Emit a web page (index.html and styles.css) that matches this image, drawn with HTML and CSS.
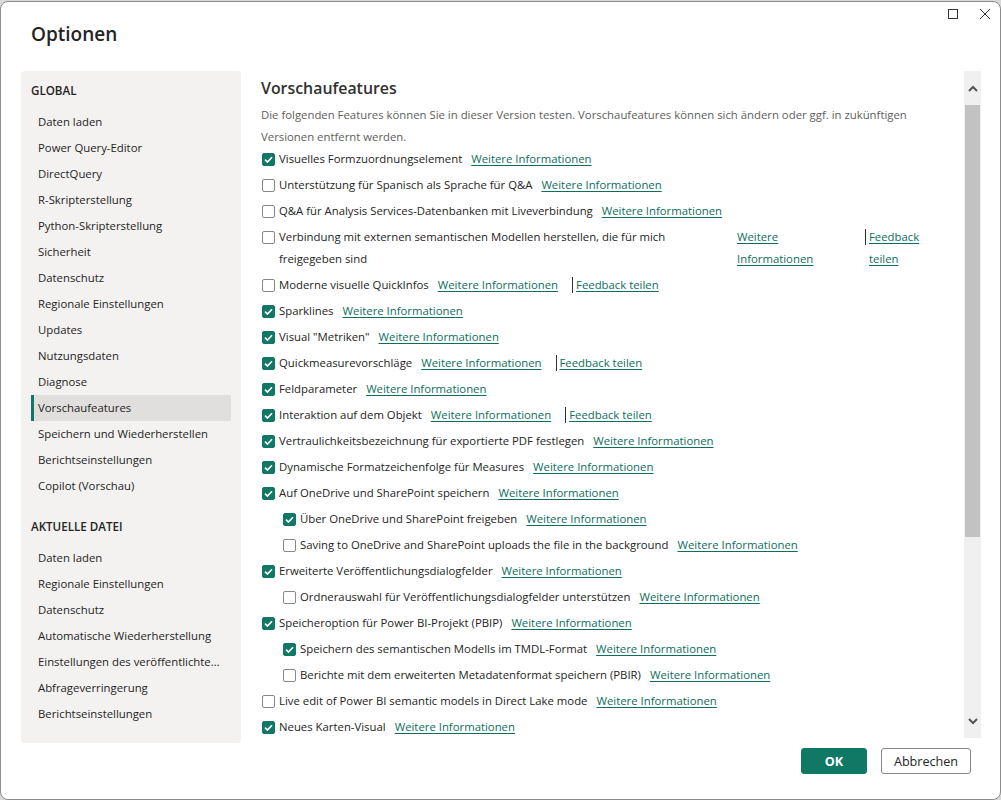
FILE: index.html
```html
<!DOCTYPE html>
<html lang="de">
<head>
<meta charset="utf-8">
<title>Optionen</title>
<link rel="stylesheet" href="styles.css">
</head>
<body>
<div class="window">
  <header class="header">
    <h1 class="title">Optionen</h1>
    <div class="controls">
      <svg class="ctl" width="12" height="12" viewBox="0 0 12 12"><rect x="1.5" y="1.5" width="9" height="9" fill="none" stroke="#333" stroke-width="1"/></svg>
      <svg class="ctl" width="12" height="12" viewBox="0 0 12 12"><path d="M1 1 L11 11 M11 1 L1 11" stroke="#333" stroke-width="1"/></svg>
    </div>
  </header>
  <div class="body">
    <nav class="sidebar">
      <div class="section-title">GLOBAL</div>
      <ul class="nav">
        <li class="nav-item">Daten laden</li>
        <li class="nav-item">Power Query-Editor</li>
        <li class="nav-item">DirectQuery</li>
        <li class="nav-item">R-Skripterstellung</li>
        <li class="nav-item">Python-Skripterstellung</li>
        <li class="nav-item">Sicherheit</li>
        <li class="nav-item">Datenschutz</li>
        <li class="nav-item">Regionale Einstellungen</li>
        <li class="nav-item">Updates</li>
        <li class="nav-item">Nutzungsdaten</li>
        <li class="nav-item">Diagnose</li>
        <li class="nav-item active">Vorschaufeatures</li>
        <li class="nav-item">Speichern und Wiederherstellen</li>
        <li class="nav-item">Berichtseinstellungen</li>
        <li class="nav-item">Copilot (Vorschau)</li>
      </ul>
      <div class="section-title second">AKTUELLE DATEI</div>
      <ul class="nav">
        <li class="nav-item">Daten laden</li>
        <li class="nav-item">Regionale Einstellungen</li>
        <li class="nav-item">Datenschutz</li>
        <li class="nav-item">Automatische Wiederherstellung</li>
        <li class="nav-item">Einstellungen des veröffentlichten Berichts</li>
        <li class="nav-item">Abfrageverringerung</li>
        <li class="nav-item">Berichtseinstellungen</li>
      </ul>
    </nav>
    <main class="main">
      <div class="content">
        <h2 class="heading">Vorschaufeatures</h2>
        <p class="desc">Die folgenden Features können Sie in dieser Version testen. Vorschaufeatures können sich ändern oder ggf. in zukünftigen Versionen entfernt werden.</p>
        <div class="row"><span class="cb on"></span><span class="label">Visuelles Formzuordnungselement</span><a class="link">Weitere Informationen</a></div>
        <div class="row"><span class="cb"></span><span class="label">Unterstützung für Spanisch als Sprache für Q&amp;A</span><a class="link">Weitere Informationen</a></div>
        <div class="row"><span class="cb"></span><span class="label">Q&amp;A für Analysis Services-Datenbanken mit Liveverbindung</span><a class="link">Weitere Informationen</a></div>
        <div class="row long"><span class="cb"></span><span class="label">Verbindung mit externen semantischen Modellen herstellen, die für mich freigegeben sind</span><a class="link">Weitere Informationen</a><span class="sep"></span><a class="link fb">Feedback teilen</a></div>
        <div class="row"><span class="cb"></span><span class="label">Moderne visuelle QuickInfos</span><a class="link">Weitere Informationen</a><span class="sep"></span><a class="link">Feedback teilen</a></div>
        <div class="row"><span class="cb on"></span><span class="label">Sparklines</span><a class="link">Weitere Informationen</a></div>
        <div class="row"><span class="cb on"></span><span class="label">Visual "Metriken"</span><a class="link">Weitere Informationen</a></div>
        <div class="row"><span class="cb on"></span><span class="label">Quickmeasurevorschläge</span><a class="link">Weitere Informationen</a><span class="sep"></span><a class="link">Feedback teilen</a></div>
        <div class="row"><span class="cb on"></span><span class="label">Feldparameter</span><a class="link">Weitere Informationen</a></div>
        <div class="row"><span class="cb on"></span><span class="label">Interaktion auf dem Objekt</span><a class="link">Weitere Informationen</a><span class="sep"></span><a class="link">Feedback teilen</a></div>
        <div class="row"><span class="cb on"></span><span class="label">Vertraulichkeitsbezeichnung für exportierte PDF festlegen</span><a class="link">Weitere Informationen</a></div>
        <div class="row"><span class="cb on"></span><span class="label">Dynamische Formatzeichenfolge für Measures</span><a class="link">Weitere Informationen</a></div>
        <div class="row"><span class="cb on"></span><span class="label">Auf OneDrive und SharePoint speichern</span><a class="link">Weitere Informationen</a></div>
        <div class="row sub"><span class="cb on"></span><span class="label">Über OneDrive und SharePoint freigeben</span><a class="link">Weitere Informationen</a></div>
        <div class="row sub"><span class="cb"></span><span class="label">Saving to OneDrive and SharePoint uploads the file in the background</span><a class="link">Weitere Informationen</a></div>
        <div class="row"><span class="cb on"></span><span class="label">Erweiterte Veröffentlichungsdialogfelder</span><a class="link">Weitere Informationen</a></div>
        <div class="row sub"><span class="cb"></span><span class="label">Ordnerauswahl für Veröffentlichungsdialogfelder unterstützen</span><a class="link">Weitere Informationen</a></div>
        <div class="row"><span class="cb on"></span><span class="label">Speicheroption für Power BI-Projekt (PBIP)</span><a class="link">Weitere Informationen</a></div>
        <div class="row sub"><span class="cb on"></span><span class="label">Speichern des semantischen Modells im TMDL-Format</span><a class="link">Weitere Informationen</a></div>
        <div class="row sub"><span class="cb"></span><span class="label">Berichte mit dem erweiterten Metadatenformat speichern (PBIR)</span><a class="link">Weitere Informationen</a></div>
        <div class="row"><span class="cb"></span><span class="label">Live edit of Power BI semantic models in Direct Lake mode</span><a class="link">Weitere Informationen</a></div>
        <div class="row"><span class="cb on"></span><span class="label">Neues Karten-Visual</span><a class="link">Weitere Informationen</a></div>
      </div>
      <div class="scrollbar">
        <div class="sb-btn"><svg width="10" height="7" viewBox="0 0 10 7"><path d="M1 6 L5 2 L9 6" fill="none" stroke="#555" stroke-width="2"/></svg></div>
        <div class="sb-thumb"></div>
        <div class="sb-fill"></div>
        <div class="sb-btn"><svg width="10" height="7" viewBox="0 0 10 7"><path d="M1 1 L5 5 L9 1" fill="none" stroke="#555" stroke-width="2"/></svg></div>
      </div>
    </main>
  </div>
  <footer class="footer">
    <button class="btn primary">OK</button>
    <button class="btn">Abbrechen</button>
  </footer>
</div>
</body>
</html>
```

FILE: styles.css
```css
* { box-sizing: border-box; }
html, body { margin: 0; padding: 0; }
body {
  background: #d9d9d9;
  font-family: "Open Sans", "Noto Sans", sans-serif;
  font-size: 11.35px;
  color: #252423;
  padding-top: 1px;
}
.window {
  width: 1001px;
  height: 799px;
  background: #fff;
  border: 1px solid #8c8c8c;
  border-radius: 8px;
  display: flex;
  flex-direction: column;
}
.header {
  height: 69px;
  display: flex;
  justify-content: space-between;
  align-items: flex-start;
  padding-left: 30px;
}
.title {
  margin: 19px 0 0;
  font-size: 19px;
  font-weight: 600;
  line-height: 26px;
  color: #252423;
}
.controls {
  display: flex;
  gap: 20px;
  padding: 6px 9px 0 0;
}
.body {
  display: flex;
  height: 672px;
  padding-left: 20px;
}
.sidebar {
  width: 220px;
  height: 672px;
  background: #f3f2f1;
  border-radius: 4px;
  padding: 7px 10px 0;
}
.section-title {
  height: 26px;
  line-height: 26px;
  font-weight: 600;
  font-size: 11.6px;
  color: #252423;
  margin-bottom: 5px;
}
.section-title.second { margin-top: 15px; }
.nav { list-style: none; margin: 0; padding: 0; }
.nav-item {
  height: 26px;
  line-height: 26px;
  padding: 0 10px 0 7px;
  white-space: nowrap;
  overflow: hidden;
  text-overflow: ellipsis;
  color: #252423;
}
.nav-item.active {
  background: #e1dfdd;
  border-left: 3px solid #117865;
  padding-left: 4px;
}
.main {
  display: flex;
  height: 667px;
  margin-left: 20px;
}
.content {
  width: 703px;
  overflow: hidden;
  padding: 5px 35px 0 0;
}
.heading {
  margin: 0 0 4px;
  font-size: 15.9px;
  line-height: 24px;
  font-weight: 600;
  color: #323130;
}
.desc {
  margin: 0;
  line-height: 22px;
  color: #605e5c;
}
.row {
  display: flex;
  align-items: flex-start;
  line-height: 22px;
  margin-bottom: 4px;
  padding-left: 1px;
}
.row.sub { padding-left: 22px; }
.cb {
  flex: none;
  width: 13px;
  height: 13px;
  margin: 5px 4px 0 0;
  border: 1px solid #8a8886;
  border-radius: 2px;
  background: #fff;
}
.cb.on {
  background: #117865 url("data:image/svg+xml;utf8,<svg xmlns='http://www.w3.org/2000/svg' width='13' height='13' viewBox='0 0 13 13'><path d='M3 6.6 L5.4 9 L10 4.2' fill='none' stroke='white' stroke-width='1.6'/></svg>") center / 13px 13px no-repeat;
  border-color: #117865;
}
.label { flex: none; }
.link {
  flex: none;
  margin-left: 9px;
  color: #0e6e5c;
  text-decoration: underline;
  text-underline-offset: 2px;
}
.sep {
  flex: none;
  width: 1px;
  height: 16px;
  margin: 3px 3px 0 14px;
  background: #323130;
}
.sep + .link { margin-left: 0; }
.row.long .label { width: 449px; flex: none; }
.row.long .link { width: 114px; }
.row.long .link.fb { width: 52px; }
.scrollbar {
  width: 17px;
  height: 667px;
  background: #f0f0f0;
  display: flex;
  flex-direction: column;
  align-items: center;
}
.sb-btn {
  height: 34px;
  width: 17px;
  display: flex;
  align-items: center;
  justify-content: center;
  flex: none;
}
.sb-thumb {
  width: 15px;
  height: 432px;
  background: #c2c2c2;
  flex: none;
}
.sb-fill { flex: 1; }
.footer {
  display: flex;
  justify-content: flex-end;
  gap: 14px;
  padding: 5px 29px 0 0;
}
.btn {
  height: 26px;
  font-family: "Open Sans", "Noto Sans", sans-serif;
  font-size: 12.6px;
  border-radius: 3px;
  border: 1px solid #8a8886;
  background: #fff;
  color: #252423;
  width: 90px;
  padding: 0;
}
.btn.primary {
  width: 66px;
  background: #117865;
  border-color: #117865;
  color: #fff;
  font-weight: 700;
}
```
